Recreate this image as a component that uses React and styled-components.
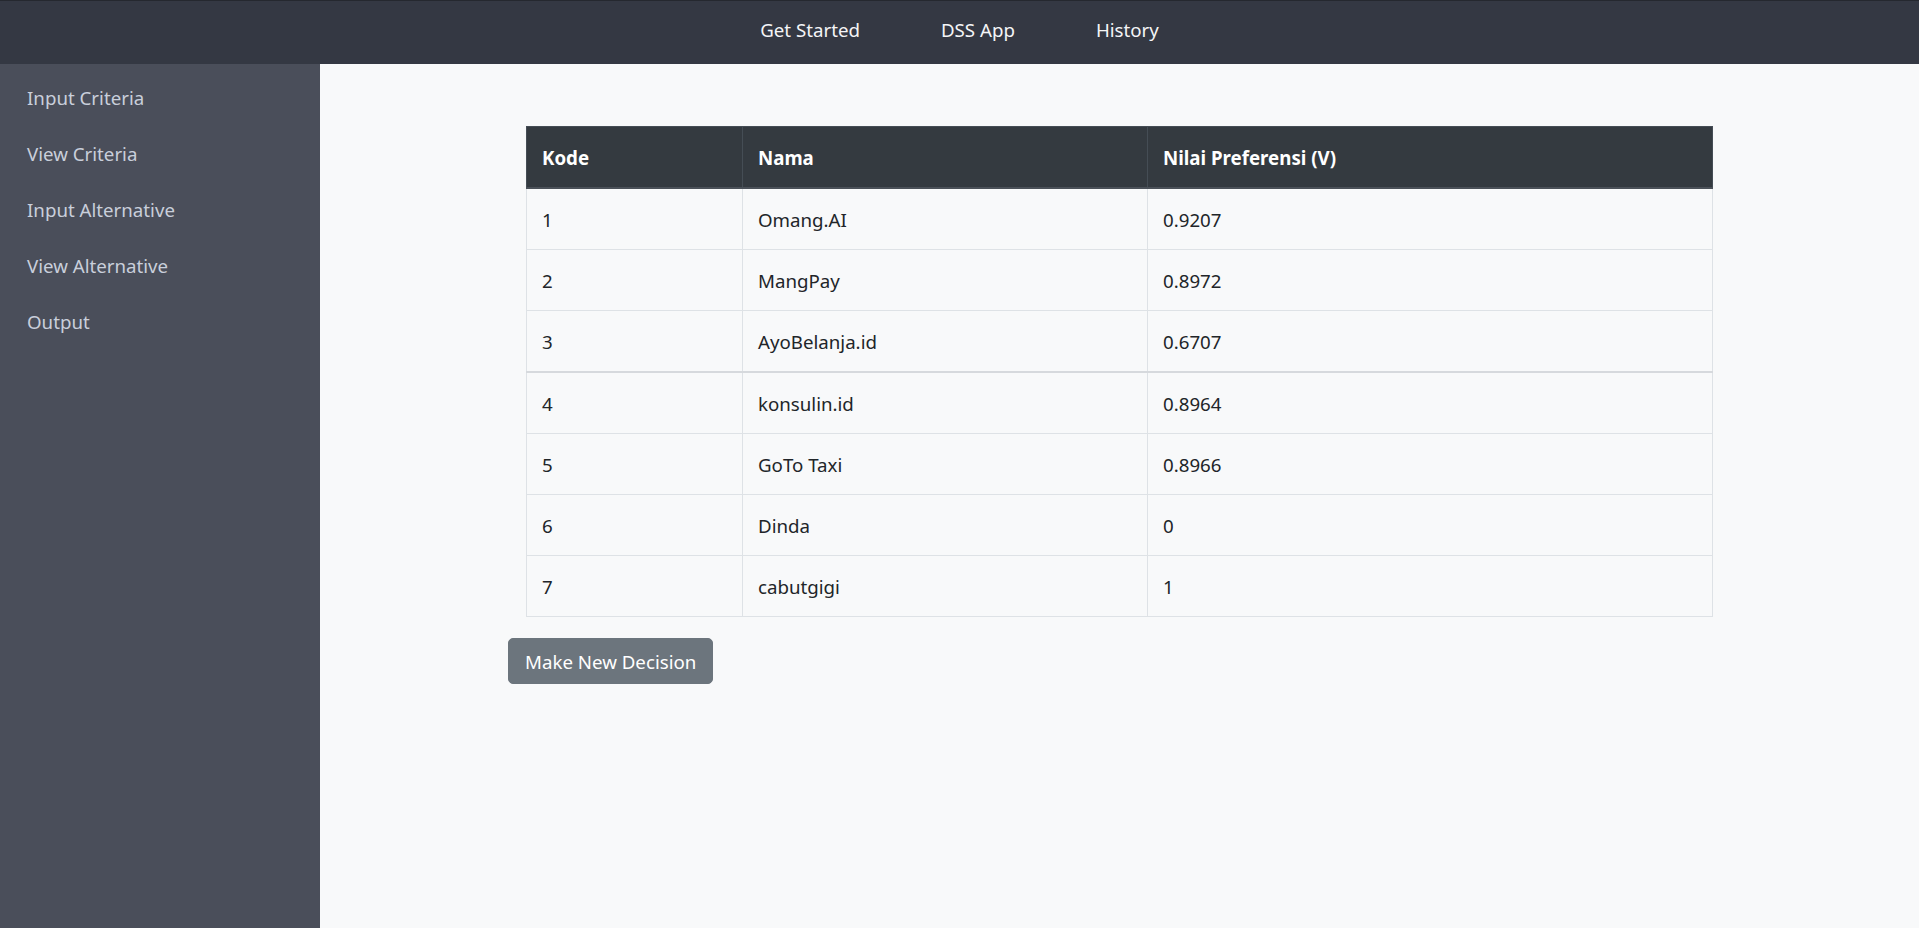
import React from 'react';
import styled, { createGlobalStyle } from 'styled-components';

const rows = [
  { kode: 1, nama: 'Omang.AI', nilai: '0.9207' },
  { kode: 2, nama: 'MangPay', nilai: '0.8972' },
  { kode: 3, nama: 'AyoBelanja.id', nilai: '0.6707' },
  { kode: 4, nama: 'konsulin.id', nilai: '0.8964', split: true },
  { kode: 5, nama: 'GoTo Taxi', nilai: '0.8966' },
  { kode: 6, nama: 'Dinda', nilai: '0' },
  { kode: 7, nama: 'cabutgigi', nilai: '1' },
];

const menu = ['Input Criteria', 'View Criteria', 'Input Alternative', 'View Alternative', 'Output'];

const GlobalStyle = createGlobalStyle`
  html, body {
    margin: 0;
    padding: 0;
    background: #f8f9fa;
  }
  body {
    font-family: "Segoe UI", "Noto Sans", "Open Sans", sans-serif;
    font-size: 18.7px;
    line-height: 30px;
    color: #212529;
  }
  * { box-sizing: border-box; }
`;

function App() {
  return (
    <>
      <GlobalStyle />
      <Page>
        <Navbar>
          <NavLink>Get Started</NavLink>
          <NavLink>DSS App</NavLink>
          <NavLink>History</NavLink>
        </Navbar>
        <Body>
          <Sidebar>
            {menu.map((m) => (
              <SideItem key={m}>{m}</SideItem>
            ))}
          </Sidebar>
          <Main>
            <Container>
              <Table>
                <thead>
                  <tr>
                    <Th style={{ width: 216 }}>Kode</Th>
                    <Th style={{ width: 405 }}>Nama</Th>
                    <Th>Nilai Preferensi (V)</Th>
                  </tr>
                </thead>
                <tbody>
                  {rows.map((r) => (
                    <tr key={r.kode}>
                      <Td $split={r.split}>{r.kode}</Td>
                      <Td $split={r.split}>{r.nama}</Td>
                      <Td $split={r.split}>{r.nilai}</Td>
                    </tr>
                  ))}
                </tbody>
              </Table>
              <Button>Make New Decision</Button>
            </Container>
          </Main>
        </Body>
      </Page>
    </>
  );
}

const Page = styled.div`
  display: flex;
  flex-direction: column;
  min-height: 100vh;
`;

const Navbar = styled.nav`
  height: 64px;
  background: #343843;
  border-top: 1px solid #25282f;
  display: flex;
  justify-content: center;
  align-items: center;
  gap: 81px;
`;

const NavLink = styled.a`
  color: #f4f5f7;
  line-height: 30px;
  cursor: pointer;
  margin-top: -6px;
`;

const Body = styled.div`
  flex: 1;
  display: flex;
`;

const Sidebar = styled.aside`
  width: 320px;
  flex-shrink: 0;
  background: #4a4e5a;
  padding-top: 6px;
  display: flex;
  flex-direction: column;
`;

const SideItem = styled.a`
  display: block;
  padding: 13px 27px;
  line-height: 30px;
  color: #c9cfdb;
  cursor: pointer;
`;

const Main = styled.main`
  flex: 1;
  background: #f8f9fa;
  padding-top: 62px;
`;

const Container = styled.div`
  width: 1223px;
  margin: 0 auto;
`;

const Table = styled.table`
  width: 1187px;
  margin: 0 18px;
  border-collapse: collapse;
  border: 1px solid #dee2e6;
`;

const Th = styled.th`
  background: #343a40;
  color: #fff;
  font-weight: 700;
  text-align: left;
  padding: 16px 15px 14px;
  line-height: 30px;
  border: 1px solid #454d55;
  border-bottom: 2px solid #4b5159;
`;

const Td = styled.td`
  padding: 16px 15px 14px;
  line-height: 30px;
  border: 1px solid #dee2e6;
  border-top: ${(p) => (p.$split ? '2px solid #d6d9dd' : '1px solid #dee2e6')};
  color: #212529;
`;

const Button = styled.button`
  margin-top: 21px;
  height: 46px;
  padding: 0 16px;
  background: #6c757d;
  border: 1px solid #6c757d;
  border-radius: 5px;
  color: #fff;
  font-family: inherit;
  font-size: 18.7px;
  cursor: pointer;
`;

export default App;
